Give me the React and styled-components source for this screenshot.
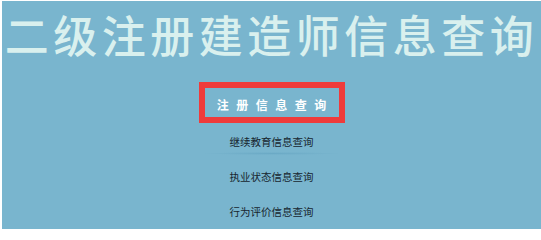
import React from "react";
import styled, { createGlobalStyle } from "styled-components";

const Global = createGlobalStyle`
  html, body { margin: 0; padding: 0; background: #ffffff; }
  body { font-family: "Noto Sans CJK SC", "Noto Sans", sans-serif; }
`;

const Page = styled.div`
  margin: 1px 0 0 2px;
  height: 228px;
  background: #79b5ce;
  display: flex;
  flex-direction: column;
  align-items: center;
  overflow: hidden;
`;

const Title = styled.h1`
  margin: 11px 0 0 0;
  font-size: 44px;
  line-height: 44px;
  font-weight: 500;
  letter-spacing: 4.5px;
  color: #d9f0ee;
  white-space: nowrap;
`;

const Highlight = styled.div`
  margin-top: 26px;
  width: 134px;
  height: 29px;
  border: 6px solid #ef3b3b;
  display: flex;
  align-items: center;
  justify-content: center;
`;

const HighlightText = styled.span`
  font-size: 12px;
  font-weight: 700;
  color: #ffffff;
  letter-spacing: 7.5px;
  margin-right: -7.5px;
  line-height: 12px;
  position: relative;
  top: 2px;
`;

const LinkList = styled.ul`
  list-style: none;
  margin: 1px 0 0 0;
  padding: 0;
  display: flex;
  flex-direction: column;
  align-items: center;
`;

const LinkRow = styled.li`
  height: 35px;
  width: 140px;
  display: flex;
  align-items: center;
  justify-content: center;
  position: relative;
  font-size: 10.5px;
  color: #17252e;
  &::after {
    content: "";
    display: ${(p) => (p.$shadow ? "block" : "none")};
    position: absolute;
    left: 0;
    right: 0;
    bottom: 4px;
    height: 3px;
    background: radial-gradient(ellipse at center, rgba(95, 160, 190, 0.55) 0%, rgba(121, 181, 206, 0) 70%);
  }
`;

const links = [
  { label: "继续教育信息查询", shadow: true },
  { label: "执业状态信息查询", shadow: false },
  { label: "行为评价信息查询", shadow: false },
];

export default function App() {
  return (
    <>
      <Global />
      <Page>
        <Title>二级注册建造师信息查询</Title>
        <Highlight>
          <HighlightText>注册信息查询</HighlightText>
        </Highlight>
        <LinkList>
          {links.map((l) => (
            <LinkRow key={l.label} $shadow={l.shadow}>
              {l.label}
            </LinkRow>
          ))}
        </LinkList>
      </Page>
    </>
  );
}
